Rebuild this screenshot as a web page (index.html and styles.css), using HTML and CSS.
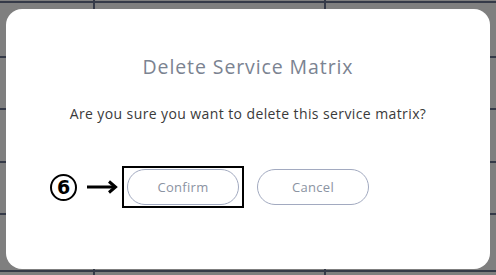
FILE: index.html
```html
<!DOCTYPE html>
<html>
<head>
<meta charset="utf-8">
<link rel="stylesheet" href="styles.css">
</head>
<body>
<div class="modal">
  <h2 class="title">Delete Service Matrix</h2>
  <p class="message">Are you sure you want to delete this service matrix?</p>
  <div class="actions">
    <div class="step">
      <span class="step-num">6</span>
      <svg class="arrow" width="32" height="14" viewBox="0 0 32 14">
        <path d="M1 7 H29" stroke="#000" stroke-width="3" fill="none"/>
        <path d="M23 1.5 L29.5 7 L23 12.5" stroke="#000" stroke-width="3" fill="none" stroke-linejoin="miter"/>
      </svg>
    </div>
    <div class="highlight">
      <button class="btn">Confirm</button>
    </div>
    <button class="btn">Cancel</button>
  </div>
</div>
</body>
</html>
```

FILE: styles.css
```css
html, body {
  margin: 0;
  padding: 0;
}
body {
  width: 496px;
  height: 275px;
  overflow: hidden;
  background-color: #7f7f7f;
  background-image:
    linear-gradient(#353a48, #353a48),
    linear-gradient(#353a48, #353a48),
    linear-gradient(#353a48, #353a48),
    linear-gradient(#353a48, #353a48),
    linear-gradient(#353a48, #353a48),
    linear-gradient(#353a48, #353a48),
    linear-gradient(#353a48, #353a48),
    linear-gradient(#353a48, #353a48);
  background-size:
    100% 2px, 100% 2px, 100% 2px, 100% 2px, 100% 2px, 100% 2px,
    2px 100%, 2px 100%;
  background-position:
    0 1px, 0 56px, 0 108px, 0 161px, 0 213px, 0 270px,
    93px 0, 324px 0;
  background-repeat: no-repeat;
  font-family: "Open Sans", "Noto Sans", sans-serif;
  padding-top: 9px;
  box-sizing: border-box;
}
.modal {
  margin: 0 6px;
  height: 260px;
  background: #fff;
  border-radius: 16px;
  display: flex;
  flex-direction: column;
  align-items: center;
  box-sizing: border-box;
  padding-top: 46px;
}
.title {
  margin: 0;
  font-weight: 400;
  font-size: 19.5px;
  line-height: 24px;
  color: #7b8391;
  letter-spacing: 0.9px;
}
.message {
  margin: 26px 0 0;
  font-size: 14px;
  line-height: 18px;
  color: #3a3a3a;
  letter-spacing: 0.4px;
}
.actions {
  margin-top: 43px;
  display: flex;
  align-items: center;
  align-self: flex-start;
  margin-left: 44px;
}
.step {
  display: flex;
  align-items: center;
  gap: 9px;
  margin-right: 4px;
}
.step-num {
  width: 23px;
  height: 23px;
  border: 2.5px solid #000;
  border-radius: 50%;
  display: flex;
  align-items: center;
  justify-content: center;
  font-family: "DejaVu Sans", sans-serif;
  font-weight: 700;
  font-size: 19px;
  color: #000;
}
.highlight {
  border: 2px solid #000;
  padding: 1px 3px;
  display: flex;
  margin-right: 13px;
}
.btn {
  width: 112px;
  height: 36px;
  border: 1px solid #a2aac0;
  border-radius: 18px;
  background: #fff;
  color: #8b93a2;
  font-family: "Open Sans", "Noto Sans", sans-serif;
  font-size: 13px;
  letter-spacing: 0.3px;
  padding: 0;
}
```
